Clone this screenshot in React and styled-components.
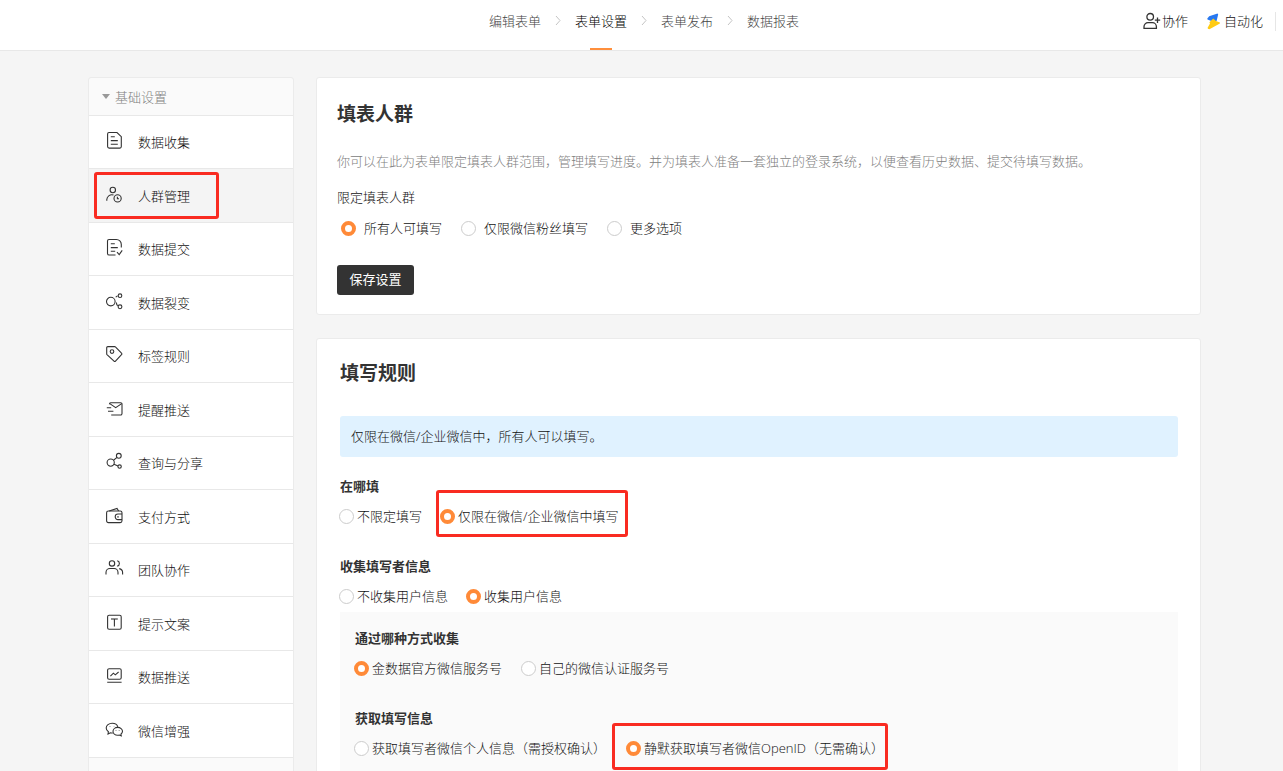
import React, { useState } from 'react';
import styled, { createGlobalStyle, css } from 'styled-components';

const GlobalStyle = createGlobalStyle`
  * {
    box-sizing: border-box;
  }

  body {
    margin: 0;
    background: #f5f5f5;
    color: #111;
    font-family: 'Open Sans', 'Noto Sans CJK SC', sans-serif;
    font-size: 13px;
    font-weight: 300;
    line-height: 20px;
  }
`;

const Page = styled.div`
  display: flex;
  flex-direction: column;
  height: 100vh;
  overflow: hidden;
`;

const Header = styled.header`
  display: grid;
  grid-template-columns: 1fr auto 1fr;
  flex: none;
  height: 51px;
  padding: 0 7px 0 12px;
  background: #fff;
  border-bottom: 1px solid #e8e8e8;
`;

const Steps = styled.nav`
  display: flex;
  grid-column: 2;
  gap: 12px;
  color: #c4c4c4;
`;

const StepArrow = styled.svg`
  width: 10px;
  height: 40px;
`;

const StepLink = styled.a`
  display: flex;
  flex-direction: column;
  align-items: center;
  justify-content: space-between;
  color: ${({ $active }) => ($active ? '#000' : '#444')};
  line-height: 42px;
  text-decoration: none;

  ${({ $active }) => $active && css`
    &::after {
      content: '';
      width: 22px;
      height: 2px;
      background: #ff8f3c;
    }
  `}
`;

const Tools = styled.div`
  display: flex;
  justify-content: flex-end;
  align-items: center;
  height: 42px;
`;

const ToolButton = styled.button`
  display: flex;
  align-items: center;
  gap: 1px;
  margin-right: ${({ $last }) => ($last ? '12px' : '17px')};
  padding: 0;
  border: none;
  background: none;
  color: #111;
  font: inherit;
  cursor: pointer;
`;

const Divider = styled.span`
  width: 1px;
  height: 19px;
  background: #e6e6e6;
`;

const Main = styled.main`
  display: flex;
  flex: 1;
  align-items: flex-start;
  gap: 22px;
  min-height: 0;
  padding: 26px 82px 0 88px;
  overflow: hidden;
`;

const Sidebar = styled.aside`
  flex: none;
  width: 206px;
  background: #fafafa;
  border: 1px solid #ebebeb;
  border-radius: 3px;
`;

const GroupHeader = styled.button`
  display: flex;
  align-items: center;
  gap: 5px;
  width: 100%;
  height: 37px;
  padding: 0 13px;
  border: none;
  background: none;
  color: #808080;
  font: inherit;
  cursor: pointer;
`;

const Caret = styled.span`
  border: 4px solid transparent;
  border-top: 5px solid #999;
  border-bottom: none;
`;

const Menu = styled.ul`
  display: grid;
  grid-template-rows: repeat(6, 53px 54px);
  margin: 0;
  padding: 0;
  list-style: none;
  border-bottom: 1px solid #e8e8e8;
`;

const MenuItem = styled.li`
  display: flex;
  border-top: 1px solid #e8e8e8;
  background: ${({ $active }) => ($active ? '#f4f4f4' : '#fff')};
`;

const MenuLink = styled.a`
  position: relative;
  display: flex;
  flex: 1;
  align-items: center;
  gap: 15px;
  padding: 0 16px;
  color: #111;
  text-decoration: none;
`;

const MenuIcon = styled.svg`
  width: 18px;
  height: 18px;
  margin-bottom: 4px;
  overflow: visible;
`;

// red frame drawn over the option it points at
const Marker = styled.span`
  position: absolute;
  inset: ${({ $inset }) => $inset};
  border: 3px solid #f92b21;
  border-radius: 3px;
  pointer-events: none;
`;

const Content = styled.div`
  display: flex;
  flex: 1;
  flex-direction: column;
  gap: 23px;
  min-width: 0;
`;

const Card = styled.section`
  padding: ${({ $padding }) => $padding};
  background: #fff;
  border: 1px solid #ebebeb;
  border-radius: 3px;
`;

const Title = styled.h2`
  margin: 0;
  color: #333;
  font-size: 19px;
  font-weight: 700;
  line-height: 28px;
`;

const Description = styled.p`
  margin: 23px 0 16px;
  color: #808080;
`;

const Notice = styled.div`
  margin: 29px 0 19px;
  padding: 10px 11px 11px;
  background: #e0f2ff;
  border-radius: 3px;
`;

const Fieldset = styled.fieldset`
  min-width: 0;
  margin: 0 0 ${({ $space }) => $space || '0'};
  padding: 0;
  border: none;
`;

const Legend = styled.legend`
  padding: 0;
  color: ${({ $bold }) => ($bold ? '#333' : 'inherit')};
  font-weight: ${({ $bold }) => ($bold ? 700 : 'inherit')};
`;

const Options = styled.div`
  display: flex;
  gap: ${({ $gap }) => $gap};
  margin: ${({ $loose }) => ($loose ? '11px 0 0 4px' : '10px 0 0 -1px')};
`;

const Option = styled.label`
  position: relative;
  display: flex;
  align-items: center;
  gap: ${({ $loose }) => ($loose ? '8px' : '3px')};
  cursor: pointer;
`;

const Radio = styled.input`
  appearance: none;
  flex: none;
  width: 15px;
  height: 15px;
  margin: 0;
  border: 1px solid #ccc;
  border-radius: 50%;
  background: #fff;
  cursor: pointer;

  &:checked {
    border: 4px solid #ff8a38;
  }
`;

const SaveButton = styled.button`
  display: block;
  min-width: 77px;
  height: 30px;
  margin-top: 27px;
  padding: 0 12px 2px;
  border: none;
  border-radius: 3px;
  background: #333;
  color: #fff;
  font: inherit;
  font-weight: 400;
  cursor: pointer;
`;

const SubPanel = styled.div`
  margin-top: 6px;
  padding: 16px 15px 40px;
  background: #fafafa;
`;

const menu = [
  {
    label: '数据收集',
    icon: (
      <>
        <path d="M4 1.5h8l4.3 4.2v9.8a1.6 1.6 0 0 1-1.6 1.6H4.2a1.6 1.6 0 0 1-1.6-1.6V3A1.5 1.5 0 0 1 4 1.5z" />
        <path d="M5.8 5.8h4M5.8 9.6h7M5.8 13.2h7" />
      </>
    ),
  },
  {
    label: '人群管理',
    active: true,
    icon: (
      <>
        <circle cx="7.8" cy="5" r="2.7" />
        <path d="M1.8 15.8v-1.2a5 5 0 0 1 6.7-4.5" />
        <circle cx="12.6" cy="13.4" r="3.6" />
        <path d="M12.4 11.7v2h1.6" />
      </>
    ),
  },
  {
    label: '数据提交',
    icon: (
      <>
        <path d="M10.5 17H4.1a1.6 1.6 0 0 1-1.6-1.6V3a1.5 1.5 0 0 1 1.5-1.5h7.4a4.9 4.9 0 0 1 4.9 4.9v3.2" />
        <path d="M5.8 5.8h4M5.8 9.6h7M5.8 13.2h4.4M12 14.2l2.2 2.4 3-4.2" />
      </>
    ),
  },
  {
    label: '数据裂变',
    icon: (
      <>
        <circle cx="5.8" cy="9.6" r="4.3" />
        <circle cx="15" cy="3.7" r="1.8" />
        <circle cx="15" cy="14.8" r="1.9" />
        <path d="M10.8 5.2c.4-.6 1-1 1.8-1.2M11.4 10.6c0 1.400.4 2.500 1.400 3.200" />
      </>
    ),
  },
  {
    label: '标签规则',
    icon: (
      <>
        <path d="M2.8 1.6h6.8a1 1 0 0 1 .8.3l6.1 6.3a1 1 0 0 1 0 1.5l-6 6.4a1 1 0 0 1-1.5 0L2 9.6a1 1 0 0 1-.3-.8V2.7a1.1 1.1 0 0 1 1.1-1.1z" />
        <circle cx="7" cy="6.6" r="1.8" />
      </>
    ),
  },
  {
    label: '提醒推送',
    icon: (
      <>
        <path d="M4.4 5.2c0-.9.5-1.4 1.3-1.4h10a1.3 1.3 0 0 1 1.3 1.3v9.5a1.4 1.4 0 0 1-1.4 1.4H6.2" />
        <path d="M4.8 4.6l5.9 4 6-4M1.8 8.8h4.4M3 12.2h5.4" />
      </>
    ),
  },
  {
    label: '查询与分享',
    icon: (
      <>
        <circle cx="5.7" cy="10.6" r="3.6" />
        <circle cx="13.8" cy="3.8" r="2.4" />
        <circle cx="14.6" cy="14.6" r="1.7" />
        <path d="M8.5 8.2L12 5.4M9 12.2l4 1.8" />
      </>
    ),
  },
  {
    label: '支付方式',
    icon: (
      <>
        <rect x="1.6" y="5" width="15.4" height="11.6" rx="1.8" />
        <path d="M4.2 5L12 2.4l1.6 2.6M17 8h-4a2.8 2.8 0 0 0 0 5.6h4" />
        <path d="M13 10v1.8" />
      </>
    ),
  },
  {
    label: '团队协作',
    icon: (
      <>
        <circle cx="7" cy="4.4" r="2.7" />
        <path d="M1 15.4v-2a3.9 3.9 0 0 1 3.9-3.9h4.2a3.9 3.9 0 0 1 3.9 3.9v2M12.2 1.8a2.7 2.7 0 0 1 0 5.3M14.2 9.6c2 .4 3.4 1.9 3.4 3.9v1.9" />
      </>
    ),
  },
  {
    label: '提示文案',
    icon: (
      <>
        <rect x="2.6" y="2.2" width="13.6" height="14" rx="1.5" />
        <line x1="6" y1="6" x2="12.8" y2="6" />
        <line x1="9.4" y1="6" x2="9.4" y2="13.4" />
      </>
    ),
  },
  {
    label: '数据推送',
    icon: (
      <>
        <rect x="2.6" y="2.8" width="13.6" height="10.4" rx="1.5" />
        <path d="M5.4 10.2l3-3 1.9 1.6L13.6 6M2.2 16.3h14.4" />
      </>
    ),
  },
  {
    label: '微信增强',
    icon: (
      <>
        <path d="M12.8 6.8C12.2 4.6 9.9 3.2 7.2 3.2 3.9 3.2 1.2 5.3 1.2 8c0 1.6.9 2.9 2.2 3.8l-.4 2.2 2.4-1.2c.7.2 1.5.3 2.4.2" />
        <path d="M12.7 7.4c-2.7 0-4.7 1.8-4.7 3.9s2 3.9 4.7 3.9c.6 0 1.1-.1 1.6-.2l1.9.9-.3-1.7c1-.7 1.6-1.7 1.6-2.9 0-2.1-2.1-3.9-4.8-3.9z" />
        <path d="M5 6.6v.4M9 6.2v.4M11 10v.4M14.2 10v.4" />
      </>
    ),
  },
];

const steps = ['编辑表单', '表单设置', '表单发布', '数据报表'];

const RadioGroup = ({ name, legend, options, initial, loose, space, gap }) => {
  const [value, setValue] = useState(initial);

  return (
    <Fieldset $space={space}>
      <Legend $bold={!loose}>{legend}</Legend>
      <Options $loose={loose} $gap={gap}>
        {options.map((option, index) => (
          <Option key={option.label} $loose={loose}>
            <Radio
              type="radio"
              name={name}
              checked={value === index}
              onChange={() => setValue(index)}
            />
            {option.label}
            {option.marker && <Marker $inset={option.marker} />}
          </Option>
        ))}
      </Options>
    </Fieldset>
  );
};

const App = () => (
  <>
    <GlobalStyle />
    <Page>
      <Header>
        <Steps>
          {steps.map((step, index) => (
            <React.Fragment key={step}>
              {index > 0 && (
                <StepArrow viewBox="0 0 10 40" fill="none" stroke="currentColor">
                  <path d="M3 16l4 4.5-4 4.5" />
                </StepArrow>
              )}
              <StepLink href="#" $active={index === 1}>{step}</StepLink>
            </React.Fragment>
          ))}
        </Steps>
        <Tools>
          <ToolButton type="button">
            <svg width="18" height="18" viewBox="0 0 18 18" fill="none" stroke="#333" strokeWidth="1.3">
              <circle cx="7.2" cy="4.8" r="3.3" />
              <path d="M1 16.3v-1.6a4 4 0 0 1 4-4h4.400a4 4 0 0 1 4 4v1.600zM11.800 8.200h5.400M14.500 5.500v5.400" />
            </svg>
            协作
          </ToolButton>
          <ToolButton type="button" $last>
            <svg width="18" height="18" viewBox="0 0 18 18">
              <path d="M4.200 4.200L12.500 1.600l.7.7-1.600 6.700-4 .6-5.100-2.200-.2-.9z" fill="#2878f0" />
              <path d="M8.200 6.400l2.800 2.600 3.900 1.600v.9L4.400 17.200l-1.500-.5-.3-1 2.400-4.200-.6-1.300z" fill="#ffcb14" />
            </svg>
            自动化
          </ToolButton>
          <Divider />
        </Tools>
      </Header>

      <Main>
        <Sidebar>
          <GroupHeader type="button">
            <Caret />
            基础设置
          </GroupHeader>
          <Menu>
            {menu.map((item) => (
              <MenuItem key={item.label} $active={item.active}>
                <MenuLink href="#">
                  <MenuIcon viewBox="0 0 18 18" fill="none" stroke="#333" strokeWidth="1.1">
                    {item.icon}
                  </MenuIcon>
                  {item.label}
                  {item.active && <Marker $inset="3px 74px 3px 5px" />}
                </MenuLink>
              </MenuItem>
            ))}
          </Menu>
          <GroupHeader type="button" aria-label="更多设置" />
        </Sidebar>

        <Content>
          <Card $padding="22px 20px 19px">
            <Title>填表人群</Title>
            <Description>
              你可以在此为表单限定填表人群范围，管理填写进度。并为填表人准备一套独立的登录系统，以便查看历史数据、提交待填写数据。
            </Description>
            <RadioGroup
              loose
              name="audience"
              legend="限定填表人群"
              initial={0}
              gap="19px"
              options={[
                { label: '所有人可填写' },
                { label: '仅限微信粉丝填写' },
                { label: '更多选项' },
              ]}
            />
            <SaveButton type="button">保存设置</SaveButton>
          </Card>

          <Card $padding="20px 22px 24px 23px">
            <Title>填写规则</Title>
            <Notice>仅限在微信/企业微信中，所有人可以填写。</Notice>
            <RadioGroup
              name="place"
              legend="在哪填"
              initial={1}
              space="30px"
              gap="18px"
              options={[
                { label: '不限定填写' },
                { label: '仅限在微信/企业微信中填写', marker: '-16px -10px -11px -4px' },
              ]}
            />
            <RadioGroup
              name="collect"
              legend="收集填写者信息"
              initial={1}
              gap="18px"
              options={[{ label: '不收集用户信息' }, { label: '收集用户信息' }]}
            />
            <SubPanel>
              <RadioGroup
                name="channel"
                legend="通过哪种方式收集"
                initial={0}
                space="30px"
                gap="19px"
                options={[
                  { label: '金数据官方微信服务号' },
                  { label: '自己的微信认证服务号' },
                ]}
              />
              <RadioGroup
                name="info"
                legend="获取填写信息"
                initial={1}
                gap="20px"
                options={[
                  { label: '获取填写者微信个人信息（需授权确认）' },
                  { label: '静默获取填写者微信OpenID（无需确认）', marker: '-15px -4px -12px -14px' },
                ]}
              />
            </SubPanel>
          </Card>
        </Content>
      </Main>
    </Page>
  </>
);

export default App;
